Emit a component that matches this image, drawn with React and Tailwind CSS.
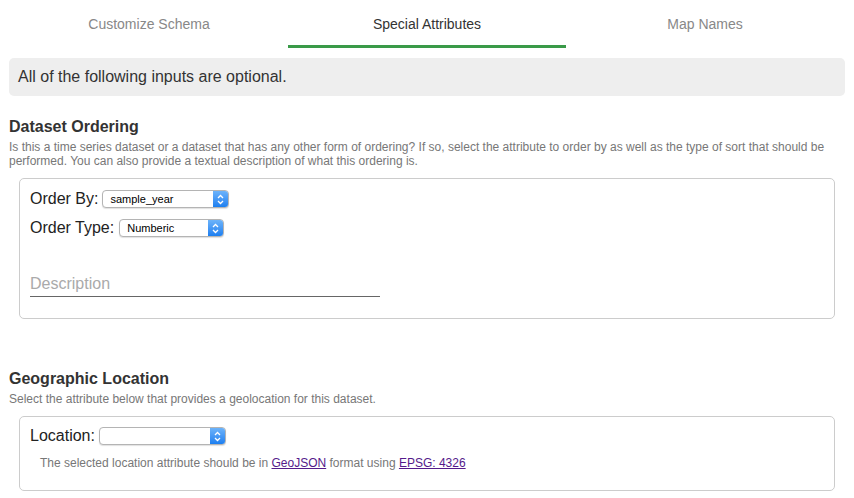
import React from "react";

const FakeSelect = ({ value, width }) => (
  <div
    className={`inline-flex h-[18px] items-stretch rounded-[4px] border border-[#b4b4b4] bg-white shadow-[0_1px_1px_rgba(0,0,0,0.12)] ${width}`}
  >
    <span className="flex-1 truncate pl-[7px] text-[11px] leading-[16px] text-black">{value}</span>
    <span className="flex w-[15px] items-center justify-center rounded-r-[3px] bg-gradient-to-b from-[#6cb3fa] to-[#1a7ff0]">
      <svg width="7" height="11" viewBox="0 0 7 11" fill="none" stroke="white" strokeWidth="1.3">
        <path d="M1 4 L3.5 1.5 L6 4" />
        <path d="M1 7 L3.5 9.5 L6 7" />
      </svg>
    </span>
  </div>
);

const tabs = ["Customize Schema", "Special Attributes", "Map Names"];

export default function App() {
  return (
    <div className="w-[854px] h-[498px] overflow-hidden bg-white font-['Liberation_Sans',Arial,sans-serif] text-[#333]">
      <div className="flex px-[10px]">
        {tabs.map((t, i) => (
          <div
            key={t}
            className={`flex h-[48px] flex-1 items-center justify-center border-b-[3px] pt-[4px] text-[14px] ${
              i === 1 ? "border-[#3a9a48] text-[#333]" : "border-transparent text-[#888]"
            }`}
          >
            {t}
          </div>
        ))}
      </div>

      <div className="mx-[9px] mt-[10px] flex h-[38px] items-center rounded-[5px] bg-[#eeeeee] px-[9px] text-[16px] text-[#333]">
        All of the following inputs are optional.
      </div>

      <div className="px-[9px] pt-[21px]">
        <h2 className="text-[16px] font-bold leading-[20px] text-[#333]">Dataset Ordering</h2>
        <p className="mt-[3px] text-[12px] leading-[14px] text-[#777]">
          Is this a time series dataset or a dataset that has any other form of ordering? If so, select the attribute to order by as well as the type of sort that should be performed. You can also provide a textual description of what this ordering is.
        </p>

        <div className="ml-[10px] mr-[10px] mt-[10px] h-[141px] rounded-[5px] border border-[#cccccc] px-[10px] pt-[9px]">
          <div className="flex items-center gap-[4px] text-[16px] leading-[22px] text-[#222]">
            <span>Order By:</span>
            <FakeSelect value="sample_year" width="w-[127px]" />
          </div>
          <div className="mt-[7px] flex items-center gap-[5px] text-[16px] leading-[22px] text-[#222]">
            <span>Order Type:</span>
            <FakeSelect value="Numberic" width="w-[105px]" />
          </div>
          <div className="mt-[35px] w-[350px] border-b border-[#666] pb-[2px] text-[16px] leading-[20px] text-[#aaa]">
            Description
          </div>
        </div>

        <h2 className="mt-[50px] text-[16px] font-bold leading-[20px] text-[#333]">Geographic Location</h2>
        <p className="mt-[3px] text-[12px] leading-[14px] text-[#777]">
          Select the attribute below that provides a geolocation for this dataset.
        </p>

        <div className="ml-[10px] mr-[10px] mt-[10px] h-[75px] rounded-[5px] border border-[#cccccc] px-[10px] pt-[8px]">
          <div className="flex items-center gap-[4px] text-[16px] leading-[22px] text-[#222]">
            <span>Location:</span>
            <FakeSelect value="" width="w-[127px]" />
          </div>
          <p className="mt-[9px] pl-[10px] text-[12px] leading-[15px] text-[#777]">
            The selected location attribute should be in{" "}
            <a href="#" className="text-[#551a8b] underline">GeoJSON</a> format using{" "}
            <a href="#" className="text-[#551a8b] underline">EPSG: 4326</a>
          </p>
        </div>
      </div>
    </div>
  );
}
